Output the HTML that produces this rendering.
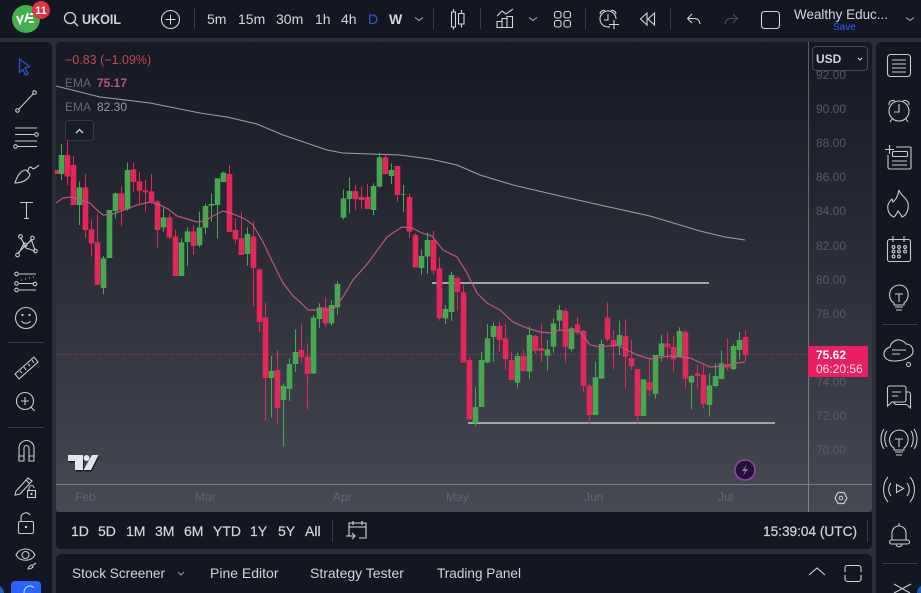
<!DOCTYPE html>
<html><head><meta charset="utf-8"><title>UKOIL</title>
<style>
html,body{margin:0;padding:0;width:921px;height:593px;overflow:hidden;background:#2a2e39}
body{position:relative;font-family:"Liberation Sans",sans-serif}
.p{position:absolute;background:#131722}
svg{position:absolute;left:0;top:0}
text{font-family:"Liberation Sans",sans-serif}
</style></head><body>
<div class="p" style="left:0;top:0;width:921px;height:38px"></div>
<div class="p" style="left:0;top:42px;width:52px;height:551px;border-radius:0 5px 0 0"></div>
<div class="p" style="left:876px;top:42px;width:45px;height:551px;border-radius:5px 0 0 0"></div>
<div class="p" style="left:56px;top:512px;width:816px;height:37px;border-radius:0 0 5px 5px"></div>
<div class="p" style="left:56px;top:554px;width:816px;height:39px;border-radius:5px 5px 0 0"></div>
<svg width="921" height="593" viewBox="0 0 921 593">
<defs><linearGradient id="bg" x1="0" y1="0" x2="0" y2="1"><stop offset="0" stop-color="#151924"/><stop offset=".45" stop-color="#2a2d38"/><stop offset="1" stop-color="#474a54"/></linearGradient></defs>
<rect x="56" y="42" width="816" height="470" rx="4" fill="url(#bg)"/>
<!-- legend backdrop -->
<rect x="60" y="72" width="74" height="46" fill="#1a1e29" opacity=".55"/>
<!-- price line -->
<path d="M56 354.5H808" stroke="#c9406c" stroke-width="1" stroke-dasharray="1 2" opacity=".8"/>
<!-- EMA gray -->
<path d="M56 86L100 97L150 103L200 113L227 117L257 124L283 135L327 150L343 153L400 155L430 159L457 165L480 175L513 185L560 196L600 205L650 216L700 231L725 237L745 240" fill="none" stroke="#9d9fa6" stroke-width="1.1"/>
<!-- horizontal drawn lines -->
<path d="M432 283H709M468 423H775" stroke="#a2a4aa" stroke-width="2" fill="none"/>
<!-- candles -->
<g fill="none">
<g transform="translate(0,150) scale(1,.33333)">
<path stroke="#e5265a" d="M57.5 60V72M67.5-30V105M73.5 18V165M85.5 72V265M91.5 208V320M97.5 190V405M121.5 108V228M133.5 38V125M139.5 65V160M145.5 90V185M151.5 72V160M157.5 150V295M169.5 190V268M175.5 240V378M193.5 225V315M229.5 45V246M235.5 205V280M241.5 185V315M253.5 215V470M259.5 355V546M265.5 458V812M277.5 600V825M301.5 522V640M307.5 580V778M325.5 442V530M355.5 105V180M361.5 110V178M367.5 102V178M385.5 12V75M397.5 48V155M409.5 130V265M415.5 250V352M433.5 243V375M439.5 322V512M457.5 378V482M463.5 405V638M469.5 620V808M499.5 515V606M505.5 522V660M511.5 605V690M523.5 598V665M535.5 555V612M541.5 520V636"/>
<path stroke="#46a94f" d="M61.5-18V90M79.5 95V225M103.5 318V432M115.5 128V205M127.5 38V182M163.5 170V245M181.5 265V378M187.5 232V348M199.5 185V292M205.5 160V252M211.5 130V215M217.5 85V265M223.5 65V96M247.5 232V348M271.5 618V802M283.5 700V890M289.5 625V753M295.5 538V666M313.5 495V672M319.5 460V533M331.5 450V528M337.5 393V495M343.5 118V208M349.5 82V190M373.5 100V195M379.5 8V112M391.5 40V102M403.5 105V185M421.5 298V375M427.5 248V372M445.5 465V522M451.5 365V513M475.5 712V828M481.5 606V771M487.5 522V640M493.5 518V635M517.5 608V716M529.5 530V688M547.5 570V662M553.5 505V608M559.5 465V540"/>
<path stroke="#e5265a" stroke-width="5.6" d="M57.5 60V72M67.5 15V80M73.5 45V165M85.5 112V240M91.5 238V280M97.5 277V405M121.5 130V180M133.5 58V96M139.5 94V122M145.5 121V127M151.5 124V156M157.5 154V240M169.5 202V262M175.5 259V378M193.5 244V288M229.5 72V246M235.5 240V268M241.5 265V315M253.5 259V354M259.5 358V516M265.5 502V684M277.5 660V774M301.5 600V622M307.5 620V672M325.5 472V520M355.5 123V147M361.5 141V150M367.5 141V177M385.5 22V72M397.5 48V135M409.5 141V245M415.5 255V352M433.5 270V362M439.5 355V504M457.5 384V426M463.5 427V638M469.5 630V808M499.5 528V570M505.5 565V627M511.5 630V690M523.5 618V663M535.5 558V603M541.5 594V603"/>
<path stroke="#46a94f" stroke-width="5.6" d="M61.5 15V72M79.5 112V165M103.5 325V414M109.5 180V324M115.5 130V183M127.5 60V178M163.5 202V232M181.5 277V378M187.5 244V276M199.5 232V286M205.5 168V233M211.5 162V167M217.5 85V165M223.5 68V96M247.5 252V312M271.5 663V684M283.5 708V750M289.5 642V717M295.5 606V642M313.5 503V670M319.5 472V507M331.5 465V520M337.5 402V472M343.5 145V203M349.5 123V147M373.5 108V180M379.5 22V110M391.5 60V78M403.5 132V134M421.5 318V354M427.5 270V320M445.5 477V505M451.5 375V486M475.5 771V820M481.5 630V771M487.5 565V637M493.5 528V561M517.5 618V698M529.5 555V665M547.5 598V617M553.5 520V590M559.5 480V512"/>
</g>
<g transform="translate(0,280) scale(1,.33333)">
<path stroke="#e5265a" d="M565.5 85V248M577.5 112V165M583.5 150V338M589.5 310V430M607.5 67V185M613.5 150V268M625.5 118V325M631.5 180V268M637.5 267V430M649.5 232V350M667.5 157V238M673.5 170V275M685.5 150V325M697.5 255V325M703.5 255V385M727.5 175V272M745.5 150V245"/>
<path stroke="#46a94f" d="M571.5 140V215M595.5 245V405M601.5 180V296M619.5 122V225M643.5 298V408M655.5 225V356M661.5 165V245M679.5 142V232M691.5 285V388M709.5 280V410M715.5 250V322M721.5 212V297M733.5 190V270M739.5 155V238"/>
<path stroke="#e5265a" stroke-width="5.6" d="M565.5 93V200M577.5 133V153M583.5 153V318M589.5 318V405M607.5 112V178M613.5 180V200M625.5 168V230M631.5 234V258M637.5 267V408M649.5 306V330M667.5 190V202M673.5 201V238M685.5 156V296M697.5 280V288M703.5 285V372M727.5 253V263M745.5 171V225"/>
<path stroke="#46a94f" stroke-width="5.6" d="M571.5 145V207M595.5 292V405M601.5 192V296M619.5 165V197M643.5 298V408M655.5 225V342M661.5 190V228M679.5 153V230M691.5 288V308M709.5 316V375M715.5 288V318M721.5 250V297M733.5 198V267M739.5 180V210"/>
</g>
</g>
<!-- EMA pink -->
<path d="M56 203L63 198L72 197L83 201L90 203L97 210L103 215L113 214L127 209L137 205L150 202L160 205L168 209L177 216L187 219L197 222L205 221L213 216L223 211L233 214L245 219L253 225L263 242L273 263L283 283L293 296L300 302L308 310L317 310L333 310L343 297L353 280L368 263L387 237L402 227L412 228L422 233L432 236L443 250L457 257L467 273L477 293L487 303L500 310L513 322L527 328L540 332L550 333L560 330L580 332L590 345L600 347L617 345L637 355L650 359L670 356L690 358L710 367L723 366L737 363L745 362" fill="none" stroke="#bb5781" stroke-width="1.2"/>
<!-- axes -->
<path d="M56 484.5H872M808.5 42V512" stroke="#fff" stroke-opacity=".3" stroke-width="1"/>
<!-- price labels -->
<g font-size="12" fill="#585b66">
<text x="816" y="79">92.00</text><text x="816" y="113">90.00</text><text x="816" y="147">88.00</text><text x="816" y="181">86.00</text><text x="816" y="215">84.00</text><text x="816" y="250">82.00</text><text x="816" y="284">80.00</text><text x="816" y="318">78.00</text><text x="816" y="386">74.00</text><text x="816" y="420">72.00</text><text x="816" y="454">70.00</text>
</g>
<!-- USD box -->
<rect x="812.5" y="46.5" width="55" height="24" rx="4" fill="#151924" fill-opacity=".85" stroke="#484b56"/>
<text x="816" y="63" font-size="12" font-weight="bold" fill="#d1d4dc">USD</text>
<path d="M858 58l2 2 2-2" stroke="#d1d4dc" fill="none"/>
<!-- price tag -->
<rect x="808" y="346" width="60" height="31" fill="#e91e63"/>
<text x="816" y="359" font-size="12" font-weight="bold" fill="#fff">75.62</text>
<text x="816" y="373" font-size="12" fill="#fbdbe6">06:20:56</text>
<!-- time axis -->
<g font-size="12" fill="#62656f">
<text x="75" y="501">Feb</text><text x="195" y="501">Mar</text><text x="333" y="501">Apr</text><text x="446" y="501">May</text><text x="584" y="501">Jun</text><text x="718" y="501">Jul</text>
</g>
<!-- legend -->
<text x="65" y="64" font-size="12.5" fill="#c9444e">−0.83 (−1.09%)</text>
<text x="65" y="87" font-size="12" fill="#666973">EMA</text><text x="97" y="87" font-size="12" font-weight="bold" fill="#c0527f">75.17</text>
<text x="65" y="111" font-size="12" fill="#666973">EMA</text><text x="97" y="111" font-size="12" fill="#9a9ca3">82.30</text>
<rect x="65.5" y="120.5" width="28" height="20" rx="3" fill="#181c27" stroke="#363a45"/>
<path d="M76 133l3.500-3.500 3.500 3.500" stroke="#d1d4dc" fill="none" stroke-width="1.300"/>
<!-- TV logo -->
<g transform="translate(67,453)">
<path d="M1 2H16V17H8V8H1ZM16.500 17L25 2H31.500L24 17Z" fill="#15171f" transform="translate(.8,1.500)"/>
<path d="M1 2H16V17H8V8H1ZM16.500 17L25 2H31.500L24 17Z" fill="#e4e5ea"/>
<circle cx="19.500" cy="5" r="3" fill="#e4e5ea"/>
</g>
<!-- lightning -->
<circle cx="745" cy="470" r="10" fill="#1f1433" stroke="#9a3fb3" stroke-width="1.500"/>
<path d="M747 464l-5 7h3l-2 5 5-7h-3z" fill="#b455d6"/>
<!-- settings hex -->
<path d="M835 498l3-5.500h6l3 5.500-3 5.500h-6z" fill="none" stroke="#c4c6cc" stroke-width="1.200"/><circle cx="841" cy="498" r="1.800" fill="none" stroke="#c4c6cc"/>

<!-- top bar -->
<circle cx="26" cy="19" r="14" fill="#43b14b"/>
<path d="M17 16l3 7 3-8M25 22l3-9M27 18h6M29 22h5M30 14h5" stroke="#fff" stroke-width="2" fill="none"/>
<circle cx="41" cy="10" r="9" fill="#e1323f"/>
<text x="41" y="14" font-size="11" font-weight="bold" fill="#fff" text-anchor="middle">11</text>
<circle cx="70" cy="18" r="5.500" fill="none" stroke="#d1d4dc" stroke-width="1.300"/><path d="M74 22l4 4" stroke="#d1d4dc" stroke-width="1.300"/>
<text x="82" y="24" font-size="14" font-weight="bold" fill="#d1d4dc" textLength="39" lengthAdjust="spacingAndGlyphs">UKOIL</text>
<circle cx="170.500" cy="19.500" r="9" fill="none" stroke="#d1d4dc" stroke-width="1.100"/><path d="M170.500 14.500v10M165.500 19.500h10" stroke="#d1d4dc"/>
<path d="M194.500 8v21M433.500 8v21M480.500 8v21M585.500 8v21M670.500 8v21" stroke="#3a3e49"/>
<g font-size="14" fill="#d1d4dc">
<text x="207" y="24">5m</text><text x="238" y="24">15m</text><text x="276" y="24">30m</text><text x="315" y="24">1h</text><text x="341" y="24">4h</text><text x="368" y="24" fill="#2f5cc9">D</text><text x="389" y="24" font-weight="bold">W</text>
<text x="794" y="19" font-size="14" textLength="94" lengthAdjust="spacingAndGlyphs">Wealthy Educ...</text>
<text x="833" y="30" font-size="10" fill="#2962ff">Save</text>
</g>
<g fill="none" stroke="#d1d4dc" stroke-width="1.100">
<path d="M415 17.500l4 3 4-3M529 17.500l4 3 4-3M906 17.500l4 3 4-3" stroke="#9598a1"/>
<!-- candle -->
<path d="M453.500 9v3M453.500 27v2.500M451.500 12h4v15h-4zM458.500 13.500h5.500v10.500h-5.500zM461.500 10v3.500M461.500 24v3.500"/>
<!-- indicators -->
<path d="M497 16l5-5 4 3 7-5"/><path d="M497 27.500v-6h5v6zM502 27.500v-9h5v9zM507 27.500v-11h5.500v11z"/>
<!-- layout -->
<rect x="554.500" y="11.500" width="6.500" height="6.500" rx="2"/><rect x="564" y="11.500" width="6.500" height="6.500" rx="2"/><rect x="554.500" y="20.500" width="6.500" height="6.500" rx="2"/><rect x="564" y="20.500" width="6.500" height="6.500" rx="2"/>
<!-- alarm plus -->
<path d="M610 26.700a8 8 0 1 1 6-7.700M608 14v6h-4M600 14a4 4 0 0 1 5-3.500M611 10.500a4 4 0 0 1 5 3.500M609 24.500h10M614 20v9"/>
<!-- rewind -->
<path d="M640.500 19l6.500-6v12zM648 19l6.500-6v12z"/>
<!-- undo -->
<path d="M687.500 18.500h7c3 0 5 2 5.500 5.500M692 14l-4.500 4.500 4.500 4.500"/>
<path d="M737.500 18.500h-7c-3 0-5 2-5.500 5.500M733 14l4.500 4.500-4.500 4.500" stroke="#4a4e59"/>
<rect x="761.500" y="11.500" width="18" height="17" rx="3"/>
</g>

<!-- left toolbar -->
<path d="M8 342.500h36M8 427.500h36" stroke="#3a3e49"/>
<path d="M19.500 59l10 7.500-4.500 1.500 3 6-2.500 1-2.500-5.500-3.500 3z" fill="none" stroke="#2a56c4" stroke-width="1.300"/>
<g fill="none" stroke="#c8cad0" stroke-width="1.100">
<!-- line -->
<circle cx="34.500" cy="92.500" r="1.800"/><circle cx="17.500" cy="110.500" r="1.800"/><path d="M33 94L19 109"/>
<!-- fib -->
<path d="M15 128h22M15 134.500h20M15 141h22M17 146.500h20"/><circle cx="36.500" cy="134.500" r="1.800"/><circle cx="15.500" cy="146.500" r="1.800"/>
<!-- brush -->
<path d="M15 183c2-7 6-13 11-13l4 4c-1 5-7 9-15 9zM28 172c0-5 3-6 4-4s5-1 7-3"/>
<!-- T -->
<path d="M20 202.500h13M26.500 202.500v16M24 218.500h5"/>
<!-- pattern -->
<circle cx="20.500" cy="236.500" r="1.800"/><circle cx="32.500" cy="238" r="1.800"/><circle cx="17.500" cy="255" r="1.800"/><circle cx="35.500" cy="251" r="1.800"/><circle cx="25" cy="245" r="1.800"/>
<path d="M19 253l4-8M20.500 238l4 6M32 240l-5 4M34.500 249l-3-9M21 238l5 10 9 3M18 253l8-8M26 245l6-6"/>
<!-- tree -->
<path d="M19 274h17M19 283.500h15M19 290h17"/><circle cx="16.500" cy="274" r="1.800"/><circle cx="16.500" cy="283.500" r="1.800"/><circle cx="16.500" cy="290" r="1.800"/><circle cx="35" cy="284" r="1.800"/><path d="M21 280h1M25 279h1M29 278h1M33 277h1" stroke-width="1"/>
<!-- smile -->
<circle cx="26" cy="318" r="10.500"/><path d="M21.500 321c2 3 7 3 9 0"/><circle cx="22.500" cy="315" r=".6"/><circle cx="29.500" cy="315" r=".6"/>
<!-- ruler -->
<path d="M15 375l19-17 4 5-19 17zM20 372l2 2M24 368l2 3M28 365l2 2M32 361l2 3" transform="translate(0,-1)"/>
<!-- zoom -->
<circle cx="25" cy="401" r="8.500"/><path d="M25 397v8M21 401h8M31 407l3.500 4"/>
<!-- magnet -->
<path d="M19 461v-13a7.500 7.500 0 0 1 15 0v13h-5v-13a2.500 2.500 0 0 0-5 0v13zM19 456h5M29 456h5"/>
<!-- pencil lock -->
<path d="M16 491l12-13 4 3-12 13-5 1zM26 480l4 4"/><rect x="27.500" y="490.500" width="8" height="7"/><path d="M29 490v-2a2.500 2.500 0 0 1 5 0"/><circle cx="31.500" cy="494" r=".6"/>
<!-- lock -->
<rect x="18.500" y="521.500" width="15" height="12" rx="1.500"/><path d="M21 521v-4a5 5 0 0 1 9-2"/><circle cx="26" cy="527" r=".7"/>
<!-- eye -->
<path d="M16 559c4-8 15-8 19 0-4 7-15 7-19 0z" transform="translate(0,-4)"/><circle cx="25.500" cy="555" r="3.500"/><path d="M28 569c1-3 3-4 4-4l1 2c-1 1-3 2-5 2zM33 565l3-2"/>
</g>
<path d="M11 593v-8a4 4 0 0 1 4-4h22a4 4 0 0 1 4 4v8z" fill="#2962ff"/>
<path d="M24 593c0-5 3-7 6-7 1.500 0 3 .5 4 2" fill="none" stroke="#fff" opacity=".8"/>
<path d="M0 586c2 1 4 4 4 7H0z" fill="#1b5fb8"/>
<path d="M921 586c-2 1-4 4-4 7h4z" fill="#1b5fb8"/>

<!-- bottom toolbar -->
<g font-size="14" fill="#d1d4dc">
<g stroke="#d1d4dc" stroke-width=".2">
<text x="71" y="536">1D</text><text x="98" y="536">5D</text><text x="126" y="536">1M</text><text x="155" y="536">3M</text><text x="184" y="536">6M</text><text x="213" y="536">YTD</text><text x="250" y="536">1Y</text><text x="278" y="536">5Y</text><text x="305" y="536">All</text>
<text x="763" y="536" textLength="94" lengthAdjust="spacingAndGlyphs">15:39:04 (UTC)</text>
</g>
<text x="72" y="578" textLength="93" lengthAdjust="spacingAndGlyphs">Stock Screener</text><text x="210" y="578">Pine Editor</text><text x="310" y="578">Strategy Tester</text><text x="437" y="578" textLength="84" lengthAdjust="spacingAndGlyphs">Trading Panel</text>
</g>
<path d="M332.500 520v22M867.500 520v22" stroke="#3a3e49"/>
<g fill="none" stroke="#d1d4dc" stroke-width="1.100">
<path d="M349 536v-13h17v15h-7M349 527h17M353 521v4M362 521v4M346 536h9M352 533l3 3-3 3"/>
<path d="M178 572l3 3 3-3" stroke="#9598a1"/>
<path d="M809 575l8-7 8 7"/>
<path d="M845 572v-4a2.500 2.500 0 0 1 2.500-2.500h11a2.500 2.500 0 0 1 2.500 2.500v4M845 575v4a2.500 2.500 0 0 0 2.500 2.500h11a2.500 2.500 0 0 0 2.500-2.500v-4"/>
</g>

<!-- right toolbar -->
<path d="M882 324.500h36M882 563.500h36" stroke="#3a3e49"/>
<g fill="none" stroke="#c8cad0" stroke-width="1.100">
<rect x="887.500" y="54.500" width="23" height="22" rx="3"/><path d="M892 60h14M892 64h14M892 68h14M892 72h14"/>
<circle cx="899" cy="111" r="10"/><path d="M899 104v8h-5M889 105a4 4 0 0 1 6-4M903 101a4 4 0 0 1 6 4M892 119l-2 3M906 119l2 3"/>
<path d="M885 149.500h9M889.500 145v9M896 147h14.500a.5.500 0 0 1 .5.500v20a1.500 1.500 0 0 1-1.500 1.500h-20a2 2 0 0 1-1.500-2v-12"/><rect x="892.500" y="151.500" width="15" height="5" rx="1"/><path d="M892 161h15M892 165h15"/>
<path d="M899 190c1 5 7 7 9 13 1 6-1 12-6 14-1-3-3-4-4-6-1 2-2 4-4 6-5-2-7-7-6-12 1-3 3-5 4-6l1 3c3-2 5-7 6-12z"/>
<rect x="887.500" y="239.500" width="23" height="22" rx="2"/><path d="M893 236v6M904 236v6"/><g><circle cx="893.500" cy="247" r="1.400"/><circle cx="899" cy="247" r="1.400"/><circle cx="905" cy="247" r="1.400"/><circle cx="893.500" cy="251.500" r="1.400"/><circle cx="899" cy="251.500" r="1.400"/><circle cx="905" cy="251.500" r="1.400"/><circle cx="893.500" cy="256.500" r="1.400"/><circle cx="899" cy="256.500" r="1.400"/></g>
<path d="M894 303c-7-4-6-17 5-18 10 0 12 13 5 18v2h-10zM895 294h8M899 294v8M895 307h8M896 310h6"/>
<path d="M893 361c-5 0-9-3-9-7 0-4 3-6 6-7 1-5 6-8 10-7 3 1 5 2 6 4 4 0 7 3 7 7 0 3-2 5-4 6-3 2-6 4-16 4z"/><path d="M892 350h14M892 354h8"/><circle cx="908.500" cy="364.500" r="2"/>
<path d="M887.500 388a2 2 0 0 1 2-2h14.500a2 2 0 0 1 2 2v12a2 2 0 0 1-2 2h-12l-4.500 4zM906 392h2.500a2 2 0 0 1 2 2v14l-4-3.500h-11l-2-2.500M892 392h9M892 396h6"/>
<path d="M894 448c-7-4-6-17 5-18 10 0 12 13 5 18v2h-10zM895 439h8M899 439v8M895 452h8M896 455h6M887 431c-3 4-3 11 0 16M884 429c-4 6-4 14 0 20M911 431c3 4 3 11 0 16M914 429c4 6 4 14 0 20"/>
<path d="M896.500 484.500l7 4-7 4zM891 483c-3 4-3 9 0 13M888 477c-6 7-6 18 0 25M907 483c3 4 3 9 0 13M910 477c6 7 6 18 0 25"/>
<path d="M892 540v-7a7 7 0 0 1 14 0v7"/><rect x="889.500" y="540" width="20" height="4" rx="2"/><path d="M896 544.500c1 3 5 3 6 0M899 523v3"/>
<path d="M894 584L910 593M911 584L894 593"/>
</g>
</svg>
</body></html>
